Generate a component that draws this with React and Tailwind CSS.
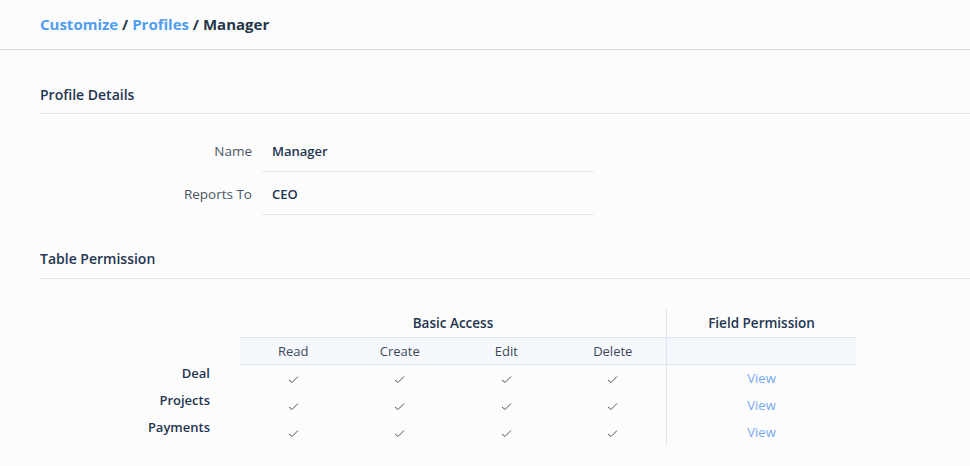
const rows = ['Deal', 'Projects', 'Payments'];
const cols = ['Read', 'Create', 'Edit', 'Delete'];

const Check = () => (
    <svg width="11" height="9" viewBox="0 0 11 9" className="inline-block">
        <path d="M1 5 L4 7.5 L10 1.5" fill="none" stroke="#4b5563" strokeWidth="1" />
    </svg>
);

const App = () => {
    return (
        <div className="w-[970px] h-[466px] bg-[#fcfcfd] overflow-hidden text-[#1f3550]" style={{ fontFamily: '"Open Sans", sans-serif' }}>
            <div className="pl-10 pt-[13px] pb-[14px] border-b border-[#d3d6da]">
                <div className="text-[15px] font-bold leading-[22px]">
                    <span className="text-[#4f9ef0]">Customize</span>
                    <span className="text-[#253649]"> / </span>
                    <span className="text-[#4f9ef0]">Profiles</span>
                    <span className="text-[#253649]"> / Manager</span>
                </div>
            </div>

            <div className="pl-10">
                <h2 className="mt-[35px] text-[14px] font-semibold leading-[20px] pb-[8px] border-b border-[#dfe6ec]">Profile Details</h2>

                <div className="mt-[15px] flex flex-col">
                    <div className="flex h-[43px]">
                        <div className="w-[212px] text-right text-[13.5px] text-[#4a5664] pt-[13px] leading-[18px]">Name</div>
                        <div className="ml-[10px] w-[332px] border-b border-[#e3e8ee] pl-[10px] pt-[13px] text-[13px] font-semibold leading-[18px]">Manager</div>
                    </div>
                    <div className="flex h-[43px]">
                        <div className="w-[212px] text-right text-[13.5px] text-[#4a5664] pt-[13px] leading-[18px]">Reports To</div>
                        <div className="ml-[10px] w-[332px] border-b border-[#e3e8ee] pl-[10px] pt-[13px] text-[13px] font-semibold leading-[18px]">CEO</div>
                    </div>
                </div>

                <h2 className="mt-[34px] text-[14px] font-semibold leading-[20px] pb-[9px] border-b border-[#dfe6ec]">Table Permission</h2>

                <div className="mt-[30px] flex">
                    <div className="w-[170px] pt-[55px] flex flex-col text-right text-[13px] font-semibold">
                        {rows.map((r) => (
                            <div key={r} className="h-[27px] leading-[18px]">{r}</div>
                        ))}
                    </div>
                    <div className="ml-[30px] w-[616px] text-[13px]">
                        <div className="flex h-[28px]">
                            <div className="w-[426px] text-center font-semibold leading-[28px] text-[13.5px]">Basic Access</div>
                            <div className="w-[190px] border-l border-[#d6e6f3] text-center font-semibold leading-[28px] text-[13.5px]">Field Permission</div>
                        </div>
                        <div className="flex h-[28px] bg-[#f5f9fd] border-y border-[#d6e6f3] text-[#3c4858]">
                            {cols.map((c) => (
                                <div key={c} className="w-[106.5px] text-center leading-[26px]">{c}</div>
                            ))}
                            <div className="w-[190px] border-l border-[#d6e6f3]"></div>
                        </div>
                        {rows.map((r) => (
                            <div key={r} className="flex h-[27px] items-center">
                                {cols.map((c) => (
                                    <div key={c} className="w-[106.5px] flex justify-center pt-[2px]"><Check /></div>
                                ))}
                                <div className="w-[190px] h-full border-l border-[#d6e6f3] text-center text-[#78a9f2] leading-[27px]">View</div>
                            </div>
                        ))}
                    </div>
                </div>
            </div>
        </div>
    );
};

export default App;
